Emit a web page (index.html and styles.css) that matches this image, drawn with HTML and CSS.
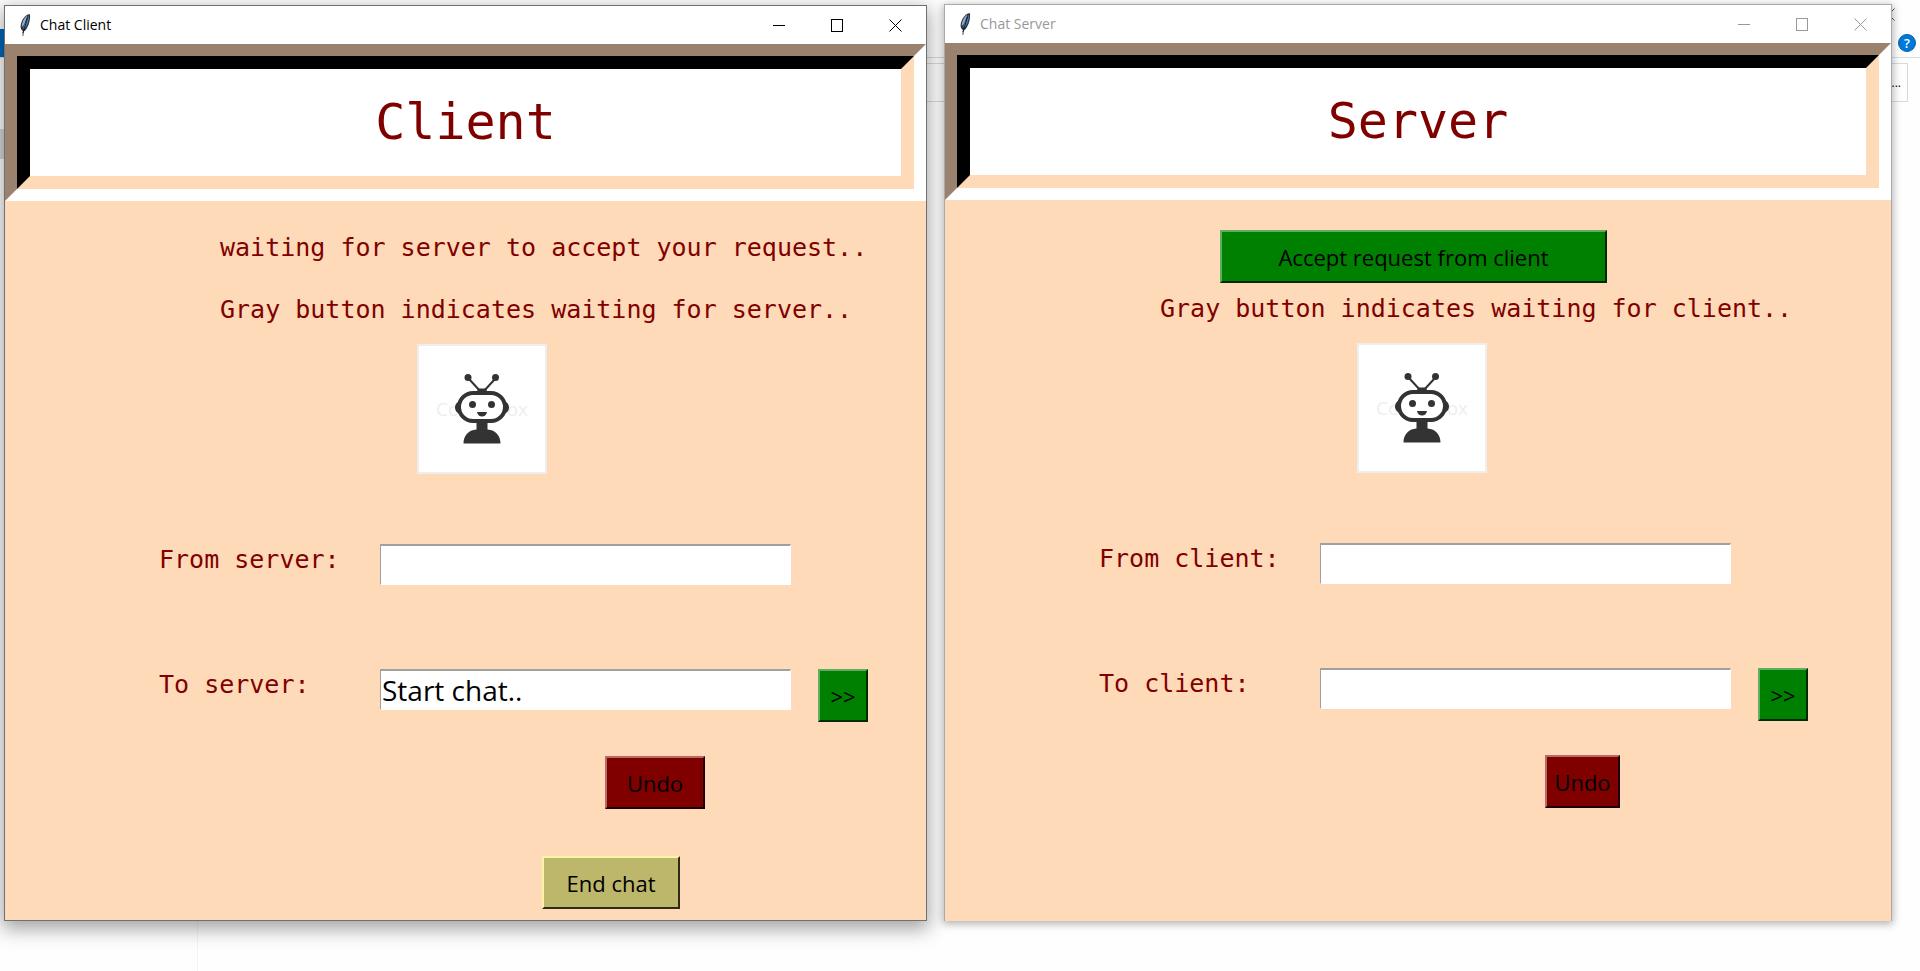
FILE: index.html
```html
<!DOCTYPE html>
<html lang="en">
<head>
<meta charset="utf-8">
<title>Chat Client and Chat Server</title>
<link rel="stylesheet" href="styles.css">
</head>
<body>
<svg class="defs" aria-hidden="true">
  <symbol id="feather" viewBox="0 0 12 24">
    <path d="M3.5 23 L3.8 18 C.8 16 1 11 4 6 C6 2.500 9 .8 11 1.200 C11.500 5 10.500 11 8 15 C7 17 5.800 18 4.800 18.500 L4.300 23Z" fill="#2b3440"/>
    <path d="M2.800 14 C2.500 10 5 4.500 8.500 2.500 L5 12Z" fill="#9aa9bb"/>
    <path d="M4 15 L9.800 2.500 C10.200 7 8.800 12 5.500 16Z" fill="#4683d0"/>
    <path d="M4 20 L8.500 5" stroke="#14202e" stroke-width="1" fill="none"/>
  </symbol>
  <symbol id="robot" viewBox="0 0 126 126">
    <g fill="#333">
      <path d="M50 33 L62 46 M76 33 L64 46" stroke="#333" stroke-width="2"/>
      <circle cx="49" cy="31.500" r="3.500"/><circle cx="76.500" cy="31.500" r="3.500"/>
      <path d="M57 48 L59 42.500 H67 L69 48Z"/>
      <path d="M42 55 C34 56 34 67 42 68Z M84 55 C92 56 92 67 84 68Z"/>
      <rect x="40" y="47" width="46" height="28" rx="14" fill="#fff" stroke="#333" stroke-width="4"/>
      <circle cx="53.500" cy="58.500" r="3.500"/><circle cx="72.500" cy="58.500" r="3.500"/>
      <path d="M58 66 H68 C67 72 59 72 58 66Z"/>
      <path d="M57.500 76 H68.500 V83.500 C77 84 81.500 90 81.500 97.500 H44.500 C44.500 90 49 84 57.500 83.500Z"/>
    </g>
  </symbol>
  <symbol id="minimize" viewBox="0 0 13 13"><path d="M0 6.500 H12" stroke="currentColor"/></symbol>
  <symbol id="maximize" viewBox="0 0 13 13"><rect x=".5" y=".5" width="11" height="12" fill="none" stroke="currentColor"/></symbol>
  <symbol id="close" viewBox="0 0 13 13"><path d="M.5 .5 L12.500 12.500 M12.500 .5 L.5 12.500" stroke="currentColor" fill="none"/></symbol>
</svg>

<div class="explorer">
  <div class="ribbon-tab"></div>
  <div class="ribbon-line"></div>
  <div class="address">...</div>
  <div class="side-selection"></div>
  <div class="side-divider"></div>
  <svg class="explorer-close"><use href="#close"/></svg>
  <button class="help" aria-label="Help">?</button>
</div>

<main class="desktop">
  <section class="window active">
    <header class="titlebar">
      <svg class="feather"><use href="#feather"/></svg>
      <span class="title">Chat Client</span>
      <button class="control" aria-label="Minimize"><svg><use href="#minimize"/></svg></button>
      <button class="control" aria-label="Maximize"><svg><use href="#maximize"/></svg></button>
      <button class="control" aria-label="Close"><svg><use href="#close"/></svg></button>
    </header>
    <div class="banner"><h1>Client</h1></div>
    <div class="body">
      <div class="status"><p class="note">waiting for server to accept your request..</p></div>
      <p class="note">Gray button indicates waiting for server..</p>
      <div class="portrait"><span>Colourbox</span><svg><use href="#robot"/></svg></div>
      <form class="chat">
        <div class="row">
          <label for="from-server">From server:</label>
          <input id="from-server" type="text">
        </div>
        <div class="row">
          <label for="to-server">To server:</label>
          <input id="to-server" type="text" value="Start chat..">
          <button type="button" class="btn green">&gt;&gt;</button>
        </div>
      </form>
      <button class="btn maroon undo wide">Undo</button>
      <button class="btn khaki">End chat</button>
    </div>
  </section>

  <section class="window inactive">
    <header class="titlebar">
      <svg class="feather"><use href="#feather"/></svg>
      <span class="title">Chat Server</span>
      <button class="control" aria-label="Minimize"><svg><use href="#minimize"/></svg></button>
      <button class="control" aria-label="Maximize"><svg><use href="#maximize"/></svg></button>
      <button class="control" aria-label="Close"><svg><use href="#close"/></svg></button>
    </header>
    <div class="banner"><h1>Server</h1></div>
    <div class="body">
      <div class="status"><button class="btn green accept">Accept request from client</button></div>
      <p class="note">Gray button indicates waiting for client..</p>
      <div class="portrait"><span>Colourbox</span><svg><use href="#robot"/></svg></div>
      <form class="chat">
        <div class="row">
          <label for="from-client">From client:</label>
          <input id="from-client" type="text">
        </div>
        <div class="row">
          <label for="to-client">To client:</label>
          <input id="to-client" type="text">
          <button type="button" class="btn green">&gt;&gt;</button>
        </div>
      </form>
      <button class="btn maroon undo">Undo</button>
    </div>
  </section>
</main>
</body>
</html>
```
FILE: styles.css
```css
* { box-sizing: border-box; }

body {
  margin: 0;
  min-height: 100vh;
  position: relative;
  overflow: hidden;
  background: #fefefe;
  font-family: "Open Sans", "Noto Sans", sans-serif;
}

.defs { position: absolute; width: 0; height: 0; }

h1, p { margin: 0; font-weight: 400; }

button { font: inherit; cursor: pointer; }

/* Window lying behind the two chat windows */
.explorer { position: absolute; inset: 0; }
.ribbon-tab { position: absolute; left: 0; top: 29px; width: 60px; height: 28px; background: #0067b8; }
.ribbon-line { position: absolute; left: 0; right: 0; top: 57px; height: 1px; background: #dadbdc; }
.address {
  position: absolute;
  left: 100px; right: 12px; top: 63px;
  height: 39px;
  padding-right: 6px;
  border: 1px solid #d9d9d9;
  text-align: right;
  font-size: 12px;
  line-height: 38px;
}
.side-selection { position: absolute; left: 0; top: 129px; width: 60px; height: 30px; background: #d9d9d9; }
.side-divider { position: absolute; left: 197px; top: 160px; bottom: 0; width: 1px; background: #f3f3f3; }
.explorer-close { position: absolute; right: 25px; top: 8px; width: 13px; height: 13px; color: #555; }
.help {
  position: absolute;
  right: 4px; top: 34px;
  width: 18px; height: 18px;
  padding: 0;
  border: 1px solid #0063b1;
  border-radius: 50%;
  background: #0078d7;
  color: #fff;
  font-size: 13px;
  font-weight: 600;
  line-height: 16px;
}

.desktop {
  position: relative;
  display: grid;
  grid-template-columns: 923fr 948fr;
  align-items: start;
  gap: 17px;
  padding: 4px 28px 0 4px;
}

.window { border: 1px solid #707070; background: #ffdab9; }
.window.active { margin-top: 1px; box-shadow: 0 6px 18px 2px rgba(0, 0, 0, .36); }
.window.inactive { border-color: #aaa; border-bottom: 0; box-shadow: 0 2px 8px 1px rgba(0, 0, 0, .3); }

.titlebar {
  display: flex;
  align-items: stretch;
  height: 38px;
  padding: 0 2px 0 14px;
  background: #fff;
  color: #000;
}
.inactive .titlebar { color: #999; }
.feather { width: 12px; height: 24px; margin: 7px 9px 0 0; }
.title { flex: 1; font-size: 14px; line-height: 37px; }
.control {
  display: flex;
  align-items: center;
  justify-content: center;
  width: 58px;
  padding: 0;
  border: 0;
  background: none;
  color: inherit;
}
.control svg { width: 13px; height: 13px; }

.banner {
  border: 12px solid;
  border-color: #9a826f #fff #fff #9a826f;
}
.banner h1 {
  border: 13px solid;
  border-color: #000 #ffdab9 #ffdab9 #000;
  background: #fff;
  color: maroon;
  font: 50px/107px "DejaVu Sans Mono", monospace;
  text-align: center;
}

.body {
  display: flex;
  flex-direction: column;
  align-items: flex-start;
  padding: 30px 0 11px;
}
.inactive .body { padding-bottom: 113px; }

.status { height: 53px; margin-bottom: 12px; }
.status .note { padding-top: 3px; }
.note, .chat label {
  color: maroon;
  font: 25px/28px "DejaVu Sans Mono", monospace;
  white-space: nowrap;
}
.note { height: 30px; margin-left: 215px; }

.portrait {
  position: relative;
  width: 130px;
  height: 130px;
  margin: 18px 0 70px 412px;
  border: 2px solid #eee;
  background: #fff;
}
.portrait span {
  position: absolute;
  inset: 0;
  color: #eee;
  font-size: 19px;
  line-height: 126px;
  text-align: center;
}
.portrait svg { position: relative; display: block; width: 126px; height: 126px; }

.chat {
  display: flex;
  flex-direction: column;
  gap: 84px;
  margin-left: 154px;
}
.row {
  display: grid;
  grid-template-columns: 221px 411px 50px;
  align-items: start;
}
.chat label { padding-top: 2px; }
.chat input {
  width: 100%;
  height: 41px;
  padding: 0 1px;
  border: 2px solid;
  border-width: 2px 1px 1px;
  border-color: #a0a0a0 #fff #fff #a0a0a0;
  background: #fff;
  color: #000;
  font: 28px "Open Sans", sans-serif;
}
.chat .btn { margin-left: 27px; width: 50px; }

.btn {
  height: 53px;
  padding: 0;
  border: 2px solid;
  color: #000;
  font-size: 22px;
}
.green { background: green; border-color: #5fae5f #002a00 #002a00 #5fae5f; }
.maroon { background: maroon; border-color: #b86a66 #1c0000 #1c0000 #b86a66; }
.khaki { background: #bdb76b; border-color: #fbf3a6 #2e2c18 #2e2c18 #fbf3a6; width: 138px; margin: 47px 0 0 537px; }
.accept { width: 387px; margin-left: 275px; }
.undo { width: 75px; margin: 34px 0 0 600px; }
.undo.wide { width: 100px; }
```
